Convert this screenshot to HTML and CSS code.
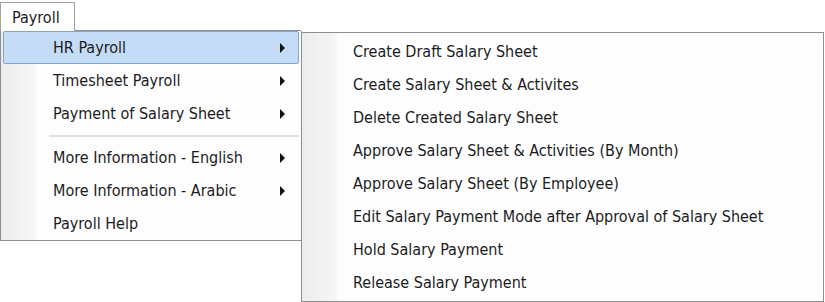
FILE: index.html
```html
<!DOCTYPE html>
<html lang="en">
<head>
  <meta charset="UTF-8">
  <title>Payroll Menu</title>
  <link rel="stylesheet" href="styles.css">
</head>
<body>
  <div class="menubar">
    <div class="tab">Payroll</div>
    <div class="tab-fill"></div>
  </div>

  <div class="menus">
    <div class="menu main-menu">
      <div class="item active"><span>HR Payroll</span><i class="arrow"></i></div>
      <div class="item"><span>Timesheet Payroll</span><i class="arrow"></i></div>
      <div class="item"><span>Payment of Salary Sheet</span><i class="arrow"></i></div>
      <div class="separator"></div>
      <div class="item"><span>More Information - English</span><i class="arrow"></i></div>
      <div class="item"><span>More Information - Arabic</span><i class="arrow"></i></div>
      <div class="item"><span>Payroll Help</span></div>
    </div>

    <div class="menu sub-menu">
      <div class="item"><span>Create Draft Salary Sheet</span></div>
      <div class="item"><span>Create Salary Sheet &amp; Activites</span></div>
      <div class="item"><span>Delete Created Salary Sheet</span></div>
      <div class="item"><span>Approve Salary Sheet &amp; Activities (By Month)</span></div>
      <div class="item"><span>Approve Salary Sheet (By Employee)</span></div>
      <div class="item"><span>Edit Salary Payment Mode after Approval of Salary Sheet</span></div>
      <div class="item"><span>Hold Salary Payment</span></div>
      <div class="item"><span>Release Salary Payment</span></div>
    </div>
  </div>
</body>
</html>
```

FILE: styles.css
```css
body { margin: 0; background: #fff; color: #1c1c1c; font-family: "DejaVu Sans Condensed", Tahoma, "Liberation Sans", sans-serif; font-size: 16px; }

/* top tab */
.menubar { display: flex; align-items: flex-end; }
.tab { margin-top: 2px; width: 75px; height: 29px; box-sizing: border-box; padding: 5px 0 0 11px; border: 1px solid #a3a3a3; border-bottom: none; }
.tab-fill { width: 226px; border-bottom: 1px solid #8e8e8e; }

/* menus */
.menus { display: flex; align-items: flex-start; }
.menu { box-sizing: border-box; border: 1px solid #8e8e8e; padding: 0 2px; background: linear-gradient(to right, #ececec 0, #f6f6f6 34px, #fdfdfd 36px, #fdfdfd 100%); }
.main-menu { width: 302px; border-top: none; }
.main-menu .item { padding-left: 49px; }
.sub-menu { width: 523px; margin-top: 1px; margin-left: -1px; padding-top: 2px; padding-bottom: 2px; }

.item { display: flex; justify-content: space-between; align-items: center; height: 33px; box-sizing: border-box; padding: 0 13px 0 48px; border: 1px solid transparent; white-space: nowrap; }
.item.active { background: #c4dcf6; border-color: #7fa5d3; border-radius: 2px; }

.arrow { width: 0; height: 0; border-left: 5px solid #111; border-top: 5px solid transparent; border-bottom: 5px solid transparent; }

.separator { height: 11px; margin-left: 46px; background: linear-gradient(#e0e0e0, #e0e0e0) center / 100% 2px no-repeat; }
```
